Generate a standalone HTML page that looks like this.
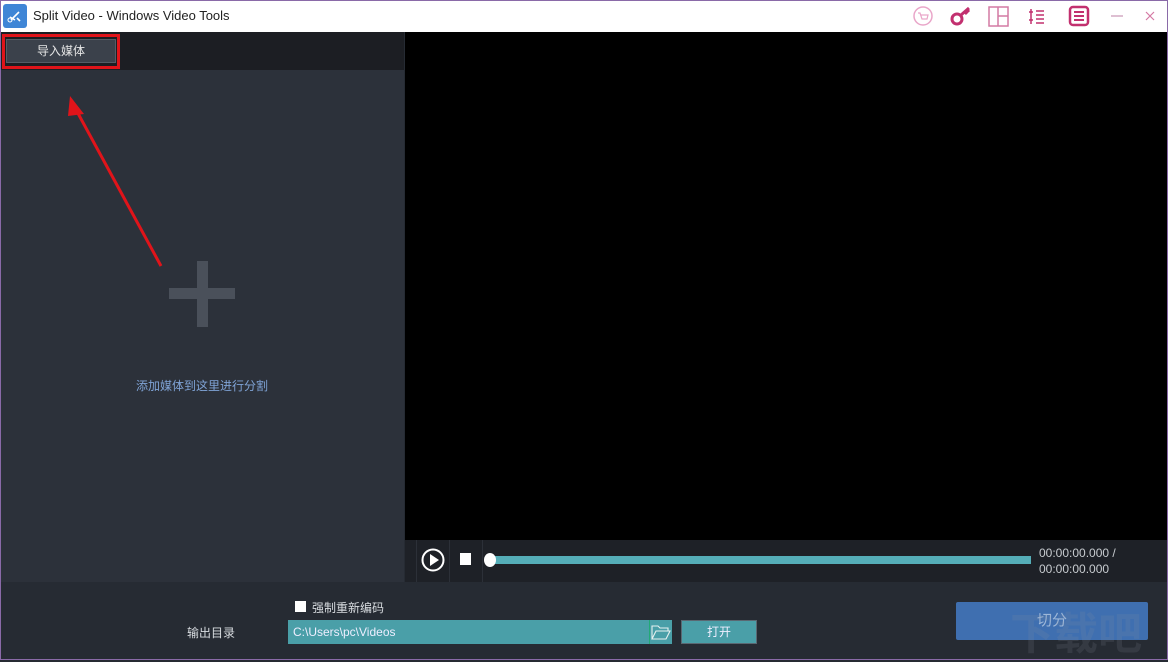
<!DOCTYPE html>
<html><head><meta charset="utf-8"><style>
*{margin:0;padding:0;box-sizing:border-box}
body{width:1168px;height:660px;overflow:hidden;font-family:"Liberation Sans","Noto Sans CJK SC",sans-serif;position:relative;background:#262b33}
.abs{position:absolute}
.t{font-size:12px;color:#d8dce0}
</style></head><body>
<div class="abs" style="left:0;top:0;width:1168px;height:660px;border:1px solid #8a6aa8;z-index:9;pointer-events:none"></div>
<div class="abs" style="left:0;top:0;width:1168px;height:32px;background:#fff"></div>
<div class="abs" style="left:3px;top:4px;width:24px;height:24px;background:#3f86d6;border-radius:3px"><svg width="24" height="24"><path d="M8 16 L16 8 M7 13 l5 3 M14 14 l3 3" stroke="#fff" stroke-width="1.6" fill="none"/><circle cx="7" cy="16" r="2" stroke="#fff" fill="none"/></svg></div>
<div class="abs" style="left:33px;top:8px;font-size:13px;color:#222">Split Video - Windows Video Tools</div>
<svg class="abs" style="left:900px;top:4px" width="260" height="24">
<circle cx="23" cy="12" r="9" fill="none" stroke="#e9a6c9" stroke-width="1.5"/><path d="M18 9h2l2 6h5l1-4h-7" fill="none" stroke="#e9a6c9" stroke-width="1.2"/>
<circle cx="57" cy="15" r="5" fill="none" stroke="#c2306f" stroke-width="3"/><path d="M61 11 L69 4 M65 8l2 2 M67 6l2 2" stroke="#c2306f" stroke-width="3"/>
<rect x="89" y="3" width="19" height="19" fill="none" stroke="#d47aa4" stroke-width="1.5"/><path d="M98 3v19 M98 12h10" stroke="#d47aa4" stroke-width="1.5"/>
<path d="M131 5v15 M129 8h4 M129 16h4 M136 7h8 M136 11h8 M136 15h8 M136 19h8" stroke="#c2306f" stroke-width="1.5"/>
<rect x="170" y="3" width="18" height="18" rx="3" fill="none" stroke="#c2306f" stroke-width="2.5"/><path d="M174 8h10M174 12h10M174 16h10" stroke="#c2306f" stroke-width="2"/>
<path d="M211 12h12" stroke="#c994b3" stroke-width="1.2"/>
<path d="M246 8l8 8M254 8l-8 8" stroke="#d47aa4" stroke-width="1.2"/>
</svg>
<div class="abs" style="left:0;top:32px;width:404px;height:38px;background:#1c1e23"></div>
<div class="abs" style="left:0;top:70px;width:404px;height:512px;background:#2c313a"></div>
<div class="abs" style="left:2px;top:34px;width:118px;height:35px;border:3px solid #e0141a"></div>
<div class="abs t" style="left:6px;top:39px;width:110px;height:24px;background:#3b414b;border:1px solid #555c66;text-align:center;line-height:22px;color:#e6e6e6">导入媒体</div>
<div class="abs" style="left:169px;top:288px;width:66px;height:11px;background:#4a505a"></div>
<div class="abs" style="left:197px;top:261px;width:11px;height:66px;background:#4a505a"></div>
<div class="abs" style="left:136px;top:377px;font-size:12px;color:#7fa3d6">添加媒体到这里进行分割</div>
<svg class="abs" style="left:60px;top:90px" width="110" height="180"><path d="M101 176 L14 16" stroke="#e0141a" stroke-width="3"/><path d="M10 6 L24 24 L8 26 Z" fill="#e0141a"/></svg>
<div class="abs" style="left:405px;top:32px;width:763px;height:508px;background:#000"></div>
<div class="abs" style="left:405px;top:540px;width:763px;height:42px;background:#1e2127"></div>
<div class="abs" style="left:416px;top:540px;width:1px;height:42px;background:#2c3038"></div>
<div class="abs" style="left:449px;top:540px;width:1px;height:42px;background:#2c3038"></div>
<div class="abs" style="left:482px;top:540px;width:1px;height:42px;background:#2c3038"></div>
<svg class="abs" style="left:420px;top:547px" width="26" height="26"><circle cx="13" cy="13" r="10.5" fill="none" stroke="#fff" stroke-width="2"/><path d="M10 7v12l9-6z" fill="#fff"/></svg>
<div class="abs" style="left:460px;top:553px;width:11px;height:12px;background:#fff"></div>
<div class="abs" style="left:488px;top:556px;width:543px;height:8px;background:#55aeb8"></div>
<div class="abs" style="left:484px;top:553px;width:12px;height:14px;border-radius:50%;background:#fff"></div>
<div class="abs t" style="left:1039px;top:545px;line-height:16px;color:#c8ccd0">00:00:00.000 /<br>00:00:00.000</div>
<div class="abs" style="left:295px;top:601px;width:11px;height:11px;background:#fff"></div>
<div class="abs t" style="left:312px;top:599px">强制重新编码</div>
<div class="abs t" style="left:187px;top:624px">输出目录</div>
<div class="abs" style="left:288px;top:620px;width:384px;height:24px;background:#4a9fa8"></div>
<div class="abs t" style="left:293px;top:625px;color:#eef">C:\Users\pc\Videos</div>
<div class="abs" style="left:649px;top:620px;width:1px;height:24px;background:#2a7"></div>
<svg class="abs" style="left:650px;top:622px" width="22" height="20"><path d="M2 4h6l2 2h8v3H6L2 17z M2 17L6 9h14l-4 8z" fill="none" stroke="#e6f0f0" stroke-width="1.1"/></svg>
<div class="abs t" style="left:681px;top:620px;width:76px;height:24px;background:#4a9fa8;border:1px solid #5a6872;text-align:center;line-height:22px;color:#eef">打开</div>
<div class="abs" style="left:956px;top:602px;width:192px;height:38px;background:#3f6fb0;border-radius:2px;text-align:center;line-height:38px;font-size:15px;color:#9db7d8">切分</div>
<div class="abs" style="left:1010px;top:598px;font-size:44px;font-weight:bold;color:rgba(140,150,160,0.15)">下载吧</div>
</body></html>
